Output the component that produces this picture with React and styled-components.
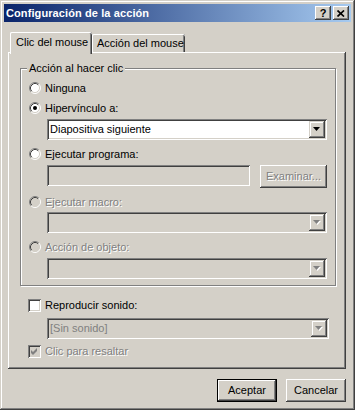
import React from 'react'
import styled, { createGlobalStyle, css } from 'styled-components'

const face = '#D4D0C8'

const GlobalStyle = createGlobalStyle`
  html, body {
    margin: 0;
    padding: 0;
    background: ${face};
  }
  body {
    font-family: "Liberation Sans", Arial, sans-serif;
    font-size: 11px;
    color: #000;
  }
  * {
    box-sizing: border-box;
  }
`

const raised = css`
  box-shadow: inset -1px -1px #404040, inset 1px 1px #fff, inset -2px -2px #808080;
`

const sunken = css`
  box-shadow: inset 1px 1px #808080, inset -1px -1px #fff, inset 2px 2px #404040, inset -2px -2px ${face};
`

const disabledText = css`
  color: #808080;
  text-shadow: 1px 1px 0 #fff;
`

const Window = styled.div`
  width: 355px;
  height: 410px;
  padding: 4px;
  background: ${face};
  overflow: hidden;
  box-shadow: inset -1px -1px #404040, inset 1px 1px ${face}, inset -2px -2px #808080, inset 2px 2px #fff;
`

const TitleBar = styled.div`
  height: 18px;
  display: flex;
  align-items: center;
  padding: 0 2px;
  background: linear-gradient(to right, #0a246a, #a6caf0);
`

const Title = styled.div`
  flex: 1;
  color: #fff;
  font-weight: bold;
  font-size: 11px;
  line-height: 14px;
  letter-spacing: 0.1px;
`

const CaptionButtons = styled.div`
  display: flex;
  gap: 2px;
`

const CaptionButton = styled.div`
  width: 16px;
  height: 14px;
  display: flex;
  align-items: center;
  justify-content: center;
  background: ${face};
  font-weight: bold;
  font-size: 11px;
  line-height: 11px;
  ${raised}
`

const Body = styled.div`
  padding: 10px 5px 0 4px;
`

const TabRow = styled.div`
  display: flex;
  align-items: flex-end;
  height: 20px;
  padding-left: 2px;
`

const Tab = styled.div`
  position: relative;
  z-index: ${p => (p.$active ? 1 : 0)};
  width: ${p => p.$w}px;
  height: ${p => (p.$active ? 22 : 18)}px;
  margin-bottom: ${p => (p.$active ? -2 : 0)}px;
  padding-left: ${p => p.$pad}px;
  padding-top: ${p => (p.$active ? 4 : 3)}px;
  background: ${face};
  line-height: 13px;
  white-space: nowrap;
  border-radius: 2px 2px 0 0;
  box-shadow: inset 1px 0 #fff, inset 0 1px #fff, inset -1px 0 #404040, inset -2px 0 #808080;
`

const Panel = styled.div`
  background: ${face};
  padding: 16px 10px 10px 12px;
  box-shadow: inset -1px -1px #404040, inset 1px 1px #fff, inset -2px -2px #808080;
`

const Group = styled.div`
  display: flex;
  flex-direction: column;
  border: 1px solid #808080;
  padding: 0 8px 6px 8px;
  box-shadow: inset 1px 1px #fff, 1px 1px 0 #fff;
`

const Legend = styled.div`
  align-self: flex-start;
  margin: -7px 0 0 -2px;
  padding: 0 2px;
  line-height: 13px;
  background: ${face};
`

const Option = styled.div`
  display: flex;
  align-items: center;
  gap: 4px;
  height: 16px;
  margin-top: ${p => p.$mt || 0}px;
  ${p => p.$disabled && disabledText}
`

const Indent = styled.div`
  display: flex;
  gap: 10px;
  margin-left: ${p => p.$ml}px;
  margin-top: ${p => p.$mt || 0}px;
`

const Field = styled.div`
  flex: 1;
  height: 21px;
  display: flex;
  align-items: center;
  padding: 0 2px 0 3px;
  background: ${p => (p.$disabled ? face : '#fff')};
  color: ${p => (p.$disabled ? '#808080' : '#000')};
  line-height: 13px;
  ${sunken}
`

const DropButton = styled.div`
  width: 16px;
  height: 17px;
  margin-left: auto;
  display: flex;
  align-items: center;
  justify-content: center;
  background: ${face};
  box-shadow: inset -1px -1px #404040, inset 1px 1px ${face}, inset -2px -2px #808080, inset 2px 2px #fff;
`

const PushButton = styled.div`
  width: ${p => p.$w}px;
  height: ${p => p.$h || 23}px;
  display: flex;
  align-items: center;
  justify-content: center;
  background: ${face};
  line-height: 13px;
  ${p => (p.$disabled ? disabledText : '')}
  box-shadow: ${p =>
    p.$default
      ? 'inset 0 0 0 1px #000, inset -2px -2px #404040, inset 2px 2px #fff, inset -3px -3px #808080'
      : 'inset -1px -1px #404040, inset 1px 1px #fff, inset -2px -2px #808080'};
`

const SoundSection = styled.div`
  display: flex;
  flex-direction: column;
  padding: 0 7px 0 8px;
`

const Check = styled.div`
  width: 13px;
  height: 13px;
  flex: none;
  background: ${p => (p.$disabled ? face : '#fff')};
  ${sunken}
`

const Footer = styled.div`
  display: flex;
  justify-content: flex-end;
  gap: 9px;
  margin-top: 10px;
`

const Radio = ({ checked, disabled }) => (
  <svg width="12" height="12" viewBox="0 0 12 12" style={{ flex: 'none' }}>
    <circle cx="6" cy="6" r="5" fill={disabled ? face : '#fff'} />
    <path d="M2.11 9.89 A5.5 5.5 0 0 1 9.89 2.11" stroke="#808080" fill="none" />
    <path d="M2.82 9.18 A4.5 4.5 0 0 1 9.18 2.82" stroke="#404040" fill="none" />
    <path d="M9.89 2.11 A5.5 5.5 0 0 1 2.11 9.89" stroke="#fff" fill="none" />
    <path d="M9.18 2.82 A4.5 4.5 0 0 1 2.82 9.18" stroke={face} fill="none" />
    {checked && <circle cx="6" cy="6" r="2" fill="#000" />}
  </svg>
)

const Arrow = ({ disabled }) => (
  <svg width="8" height="5" viewBox="0 0 8 5">
    {disabled && <polygon points="1,1 8,1 4.5,5" fill="#fff" />}
    <polygon points="0,0 7,0 3.5,4" fill={disabled ? '#808080' : '#000'} />
  </svg>
)

const CheckMark = ({ color }) => (
  <svg width="13" height="13" viewBox="0 0 13 13">
    <polygon points="3,5 5,7 9,3 9,6 5,10 3,8" fill={color} />
  </svg>
)

const Select = ({ value, disabled }) => (
  <Field $disabled={disabled}>
    {value}
    <DropButton>
      <Arrow disabled={disabled} />
    </DropButton>
  </Field>
)

export default function App() {
  return (
    <Window>
      <GlobalStyle />
      <TitleBar>
        <Title>Configuración de la acción</Title>
        <CaptionButtons>
          <CaptionButton>?</CaptionButton>
          <CaptionButton>
            <svg width="8" height="7" viewBox="0 0 8 7">
              <path d="M0.5 0.5 L7 6.5 M7 0.5 L0.5 6.5" stroke="#000" strokeWidth="1.7" />
            </svg>
          </CaptionButton>
        </CaptionButtons>
      </TitleBar>

      <Body>
        <TabRow>
          <Tab $active $w={82} $pad={6}>Clic del mouse</Tab>
          <Tab $w={93} $pad={5}>Acción del mouse</Tab>
        </TabRow>

        <Panel>
          <Group>
            <Legend>Acción al hacer clic</Legend>

            <Option $mt={5}>
              <Radio />
              Ninguna
            </Option>
            <Option $mt={4}>
              <Radio checked />
              Hipervínculo a:
            </Option>
            <Indent $ml={18} $mt={3}>
              <Select value="Diapositiva siguiente" />
            </Indent>

            <Option $mt={6}>
              <Radio />
              Ejecutar programa:
            </Option>
            <Indent $ml={18} $mt={3}>
              <Field $disabled />
              <PushButton $w={67} $disabled>Examinar...</PushButton>
            </Indent>

            <Option $mt={6} $disabled>
              <Radio disabled />
              Ejecutar macro:
            </Option>
            <Indent $ml={18} $mt={2}>
              <Select disabled />
            </Indent>

            <Option $mt={6} $disabled>
              <Radio disabled />
              Acción de objeto:
            </Option>
            <Indent $ml={18} $mt={3}>
              <Select disabled />
            </Indent>
          </Group>

          <SoundSection>
            <Option $mt={11}>
              <Check />
              Reproducir sonido:
            </Option>
            <Indent $ml={19} $mt={5}>
              <Select value="[Sin sonido]" disabled />
            </Indent>
            <Option $mt={4} $disabled>
              <Check $disabled>
                <CheckMark color="#808080" />
              </Check>
              Clic para resaltar
            </Option>
          </SoundSection>
        </Panel>

        <Footer>
          <PushButton $w={60} $default>Aceptar</PushButton>
          <PushButton $w={60}>Cancelar</PushButton>
        </Footer>
      </Body>
    </Window>
  )
}
